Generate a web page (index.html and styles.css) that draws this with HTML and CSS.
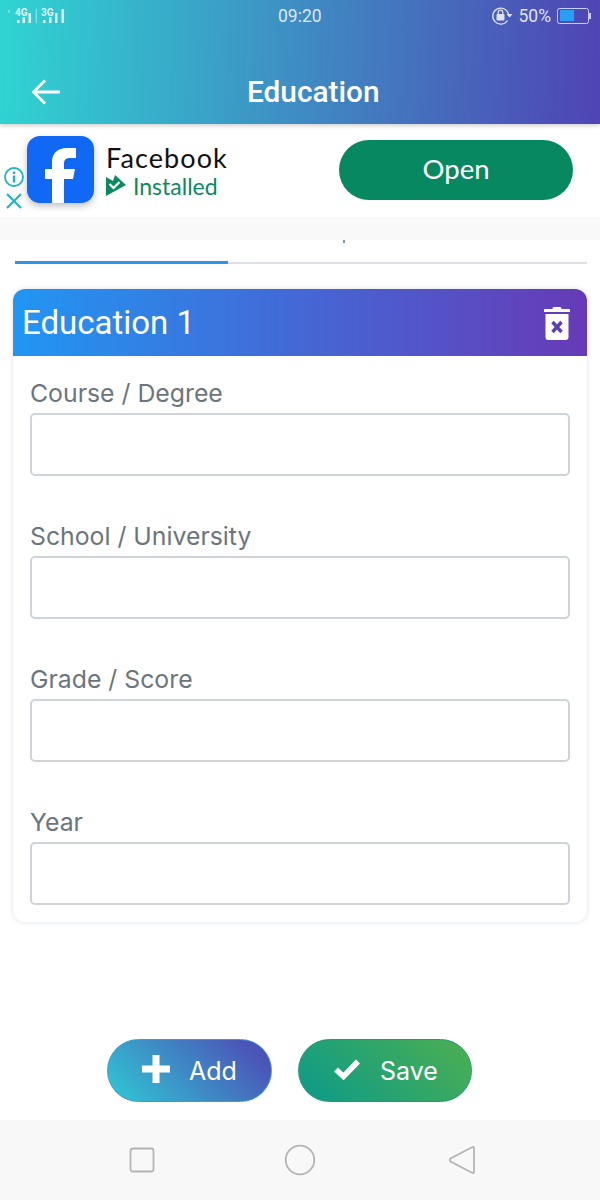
FILE: index.html
```html
<!DOCTYPE html>
<html lang="en">
<head>
<meta charset="utf-8">
<title>Education</title>
<link rel="stylesheet" href="styles.css">
</head>
<body>
<div class="phone">
  <header class="appbar">
    <div class="status">
      <div class="signals">
        <svg width="66" height="26" viewBox="0 0 66 26" class="sig-svg">
          <g fill="#dff5f7">
            <path d="M7.500 9.500 9.500 7.500 9.500 11.500Z" opacity=".6"/>
            <rect x="17" y="18" width="2.500" height="3"/><rect x="22.500" y="15" width="2.500" height="6"/><rect x="28.500" y="11" width="2.500" height="10"/>
            <rect x="35.500" y="7" width="1.500" height="14" opacity=".45"/>
            <rect x="43" y="18" width="2.500" height="3"/><rect x="49" y="15" width="2.500" height="6"/><rect x="55" y="11" width="2.500" height="10"/><rect x="61.500" y="7" width="2.500" height="14"/>
          </g>
          <text x="15" y="14" class="sig-text">4G</text>
          <text x="41" y="14" class="sig-text">3G</text>
        </svg>
      </div>
      <span class="time">09:20</span>
      <div class="status-right">
        <svg width="22" height="20" viewBox="0 0 22 20">
          <path d="M16.500 14.500A8 8 0 1 1 17.500 8" fill="none" stroke="#dfe3f7" stroke-width="1.300"/>
          <path d="M15.500 8h6l-3 3.500z" fill="#dfe3f7"/>
          <rect x="5.500" y="8" width="8" height="6.500" rx="1" fill="#dfe3f7"/>
          <path d="M7.200 8V6.500a2.300 2.300 0 0 1 4.600 0V8" fill="none" stroke="#dfe3f7" stroke-width="1.300"/>
        </svg>
        <span class="pct">50%</span>
        <div class="battery"><div class="battery-fill"></div></div>
        <div class="battery-tip"></div>
      </div>
    </div>
    <div class="titlebar">
      <svg class="back" width="30" height="28" viewBox="0 0 30 28">
        <path d="M29 14H3M14 2.500 2.500 14 14 25.500" fill="none" stroke="#fff" stroke-width="2.800"/>
      </svg>
      <h1 class="title">Education</h1>
    </div>
  </header>

  <section class="ad">
    <div class="ad-marks">
      <svg width="22" height="22" viewBox="0 0 22 22">
        <circle cx="11" cy="11" r="9" fill="none" stroke="#1fb5c9" stroke-width="1.800"/>
        <rect x="9.800" y="9.500" width="2.500" height="7" fill="#1fb5c9"/>
        <rect x="9.800" y="5.500" width="2.500" height="2.500" fill="#1fb5c9"/>
      </svg>
      <svg class="ad-close" width="18" height="18" viewBox="0 0 18 18">
        <path d="M2 2 16 16M16 2 2 16" stroke="#1fb5c9" stroke-width="2.200" fill="none"/>
      </svg>
    </div>
    <div class="fb-icon">
      <svg width="67" height="67" viewBox="0 0 67 67">
        <path d="M25 67V43H18V33H25V26C25 17 31 12 40 12H49V22H43C38.500 22 37 24 37 28V33H48L46 43H37V67Z" fill="#fff"/>
      </svg>
    </div>
    <div class="ad-info">
      <div class="ad-name">Facebook</div>
      <div class="ad-installed">
        <svg width="21" height="22" viewBox="0 0 21 22">
          <path d="M0 2 7 6 9 0 20 10 0 21Z" fill="#0b8a5f"/>
          <path d="M3.500 9 7.500 13 13.500 7" fill="none" stroke="#fff" stroke-width="2.200"/>
        </svg>
        <span>Installed</span>
      </div>
    </div>
    <div class="open-btn">Open</div>
  </section>
  <div class="ad-gap"></div>

  <div class="tabs">
    <div class="tab-dot"></div>
    <div class="tab-line"><div class="tab-active"></div></div>
  </div>

  <main class="card">
    <div class="card-head">
      <h2 class="card-title">Education 1</h2>
      <svg width="26" height="34" viewBox="0 0 26 34">
        <path d="M8.500 2.500Q8.500 1 10 1H16Q17.500 1 17.500 2.500V3H25Q26 3 26 4V6H0V4Q0 3 1 3H8.500Z" fill="#fff"/>
        <path d="M1.500 8H24.500V31Q24.500 34 21.500 34H4.500Q1.500 34 1.500 31Z" fill="#fff"/>
        <path d="M8.500 16 17.500 26M17.500 16 8.500 26" stroke="#5a3fb8" stroke-width="3.400" fill="none"/>
      </svg>
    </div>
    <div class="card-body">
      <label class="field"><span class="field-label">Course / Degree</span><input class="field-input" type="text"></label>
      <label class="field"><span class="field-label">School / University</span><input class="field-input" type="text"></label>
      <label class="field"><span class="field-label">Grade / Score</span><input class="field-input" type="text"></label>
      <label class="field"><span class="field-label">Year</span><input class="field-input" type="text"></label>
    </div>
  </main>

  <div class="actions">
    <button class="btn btn-add" type="button">
      <svg width="28" height="28" viewBox="0 0 28 28"><path d="M10.500 0H17.500V10.500H28V17.500H17.500V28H10.500V17.500H0V10.500H10.500Z" fill="#fff"/></svg>
      <span>Add</span>
    </button>
    <button class="btn btn-save" type="button">
      <svg width="28" height="22" viewBox="0 0 28 22"><path d="M3 11.500 10.500 18.500 25 3.500" fill="none" stroke="#fff" stroke-width="5.500"/></svg>
      <span>Save</span>
    </button>
  </div>

  <nav class="navbar">
    <svg width="26" height="26" viewBox="0 0 26 26"><rect x="1.500" y="1.500" width="23" height="23" rx="2.500" fill="none" stroke="#b4b4b4" stroke-width="1.800"/></svg>
    <svg width="32" height="32" viewBox="0 0 32 32"><circle cx="16" cy="16" r="14.300" fill="none" stroke="#b4b4b4" stroke-width="1.800"/></svg>
    <svg width="26" height="30" viewBox="0 0 26 30"><path d="M23.500 2 1.500 13.500Q0 15 1.500 16.500L23.500 28Q25 28.500 25 26.500V3.500Q25 1.500 23.500 2Z" fill="none" stroke="#b4b4b4" stroke-width="1.800"/></svg>
  </nav>
</div>
</body>
</html>
```
FILE: styles.css
```css
* { box-sizing: border-box; }
html, body { margin: 0; padding: 0; background: #fff; }
body { font-family: Roboto, "Liberation Sans", sans-serif; }
.phone { width: 600px; height: 1200px; display: flex; flex-direction: column; overflow: hidden; background: #fff; }

.appbar { height: 124px; flex: none; background: linear-gradient(92deg, #2fd4d2 0%, #4f44b4 100%); box-shadow: 0 2px 4px rgba(0,0,0,.18); position: relative; z-index: 2; display: flex; flex-direction: column; }
.status { height: 32px; display: flex; align-items: center; justify-content: space-between; padding: 0 9px 0 0; position: relative; }
.signals { width: 66px; height: 26px; margin-top: -3px; }
.sig-svg { display: block; }
.sig-text { font: 700 10px Roboto, sans-serif; fill: #dff5f7; }
.time { position: absolute; left: 278px; top: 5px; font-size: 17.500px; line-height: 22px; color: #dbe8f4; }
.status-right { display: flex; align-items: center; margin-top: -1px; }
.pct { font-size: 17.500px; color: #dfe3f7; margin-left: 6px; margin-right: 6px; }
.battery { width: 32px; height: 16px; border: 1.500px solid #c9cdf0; border-radius: 2.500px; padding: 1.500px; }
.battery-fill { width: 14px; height: 100%; background: #2a9df4; }
.battery-tip { width: 2px; height: 6px; background: #c9cdf0; }

.titlebar { flex: 1; display: flex; align-items: center; padding: 28px 0 0 31px; position: relative; }
.back { display: block; }
.title { margin: 0 0 0 186px; font-size: 29.800px; font-weight: 500; line-height: 40px; color: #fff; }

.ad { height: 93px; flex: none; display: flex; align-items: flex-start; background: #fff; position: relative; }
.ad-marks { width: 27px; padding: 42px 0 0 3px; display: flex; flex-direction: column; gap: 4px; }
.ad-marks svg { display: block; }
.ad-marks .ad-close { margin-left: 2px; }
.fb-icon { width: 67px; height: 67px; margin-top: 12px; border-radius: 13px; background: #1068f5; overflow: hidden; box-shadow: 0 3px 7px rgba(0,0,0,.25); }
.fb-icon svg { display: block; }
.ad-info { margin-left: 12px; margin-top: 18px; width: 233px; }
.ad-name { font-family: Lato, sans-serif; font-size: 27px; line-height: 31px; color: #111; letter-spacing: 1.100px; }
.ad-installed { display: flex; align-items: center; gap: 6px; color: #0b8a5f; font-family: Lato, sans-serif; font-size: 23px; line-height: 26px; }
.ad-installed svg { display: block; }
.open-btn { width: 234px; height: 60px; margin-top: 16px; border-radius: 30px; background: #088860; color: #fff; font-family: Lato, sans-serif; font-weight: 400; font-size: 27.500px; text-align: center; line-height: 58px; }
.ad-gap { height: 23px; flex: none; background: #f9f9fa; }

.tabs { height: 25px; flex: none; padding: 0 13px 0 15px; position: relative; }
.tab-dot { position: absolute; left: 343px; top: 0; width: 2px; height: 3px; background: #8a94a8; }
.tab-line { margin-top: 22px; height: 1.500px; background: #dcdfe8; position: relative; }
.tab-active { position: absolute; left: 0; top: -1px; width: 213px; height: 3px; background: #2a94e8; }

.card { margin: 24px 13px 0; height: 633px; flex: none; border-radius: 12px; background: #fff; box-shadow: 0 0 5px rgba(40,50,80,.16); overflow: hidden; }
.card-head { height: 67px; display: flex; align-items: center; justify-content: space-between; padding: 0 17px 0 9px; background: linear-gradient(90deg, #2196f3 0%, #673ab7 100%); }
.card-title { margin: 0; font-size: 33px; font-weight: 400; line-height: 66px; color: #fff; }
.card-head svg { display: block; margin-top: 1px; }
.card-body { padding: 21px 17px 0; display: flex; flex-direction: column; gap: 44px; }
.field { display: flex; flex-direction: column; gap: 4px; }
.field-label { font-family: Inter, Roboto, sans-serif; font-size: 24.800px; line-height: 32px; color: #6c757d; }
.field-input { width: 100%; height: 63px; border: 2px solid #ced4da; border-radius: 5px; background: #fff; padding: 0 12px; outline: none; }

.actions { flex: 1; display: flex; justify-content: flex-start; align-items: flex-start; gap: 26px; padding: 117px 0 0 107px; }
.btn { height: 63px; border-radius: 32px; display: flex; align-items: center; padding: 0; font-family: Inter, Roboto, sans-serif; font-size: 25px; color: #fff; cursor: pointer; }
.btn-add { width: 165px; border: 1.500px solid #3a9bd8; background: linear-gradient(45deg, #2fc9d4 0%, #4f44b4 100%); padding-left: 34px; gap: 19px; }
.btn-save { width: 174px; border: 1.500px solid #1f9c72; background: linear-gradient(45deg, #0c9a8a 0%, #4caf50 100%); padding-left: 34px; gap: 19px; }
.btn svg { display: block; flex: none; margin-top: -3px; }

.navbar { height: 80px; flex: none; background: #f8f8f8; display: flex; align-items: center; padding: 0 0 0 129px; }
.navbar svg { display: block; margin-top: -1px; }
.navbar svg:nth-child(2) { margin-left: 129px; }
.navbar svg:nth-child(3) { margin-left: 133px; }
```
